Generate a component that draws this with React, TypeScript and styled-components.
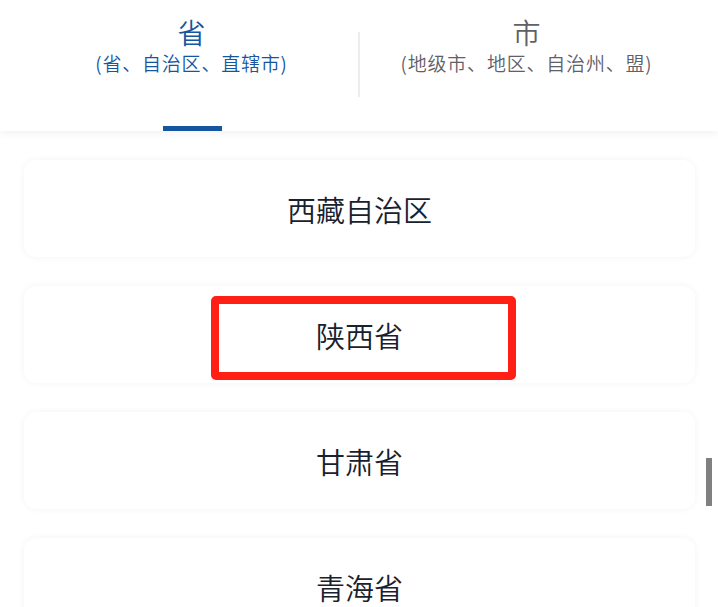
import styled, { createGlobalStyle } from 'styled-components';

const GLOBAL = createGlobalStyle`
  html, body {
    margin: 0;
    padding: 0;
    background: #ffffff;
    overflow: hidden;
    font-family: "Noto Sans CJK SC", "Noto Sans", sans-serif;
  }
`;

const PAGE = styled.div`
  position: relative;
  width: 718px;
  height: 607px;
  overflow: hidden;
  background: #ffffff;
`;

const HEADER = styled.div`
  position: relative;
  z-index: 2;
  height: 131px;
  padding: 0 24px;
  display: flex;
  background: #ffffff;
  box-shadow: 0 2px 8px rgba(0, 0, 0, 0.06);
`;

const TAB = styled.div<{ $active?: boolean; $divider?: boolean }>`
  position: relative;
  flex: 1;
  display: flex;
  flex-direction: column;
  align-items: center;
  padding-top: 13px;
  font-weight: 350;
  color: ${(p) => (p.$active ? '#15569f' : '#5f6068')};

  &::after {
    content: '';
    display: ${(p) => (p.$divider ? 'block' : 'none')};
    position: absolute;
    right: -1px;
    top: 32px;
    width: 2px;
    height: 65px;
    background: #ececec;
  }
`;

const TAB_TITLE = styled.span`
  font-size: 28px;
  line-height: 38px;
`;

const TAB_SUB = styled.span`
  font-size: 19px;
  line-height: 24px;
  letter-spacing: 0.8px;
`;

const INDICATOR = styled.div`
  position: absolute;
  bottom: 0;
  left: 50%;
  width: 59px;
  height: 5px;
  margin-left: -29px;
  background: #15569f;
`;

const LIST = styled.div`
  display: flex;
  flex-direction: column;
  gap: 29px;
  padding: 29px 23px 0 24px;
`;

const CARD = styled.div`
  position: relative;
  height: 97px;
  flex-shrink: 0;
  display: flex;
  align-items: center;
  justify-content: center;
  background: #ffffff;
  border-radius: 12px;
  box-shadow: 0 0 7px rgba(0, 0, 0, 0.05);
  font-size: 29px;
  font-weight: 350;
  color: #18212e;
`;

const HIGHLIGHT = styled.div`
  position: absolute;
  left: 187px;
  top: 10px;
  width: 305px;
  height: 84px;
  box-sizing: border-box;
  border: 8px solid #ff1f14;
  border-radius: 5px;
`;

const SCROLL_THUMB = styled.div`
  position: absolute;
  left: 706px;
  top: 458px;
  width: 6px;
  height: 48px;
  background: #808080;
`;

const provinces = ['西藏自治区', '陕西省', '甘肃省', '青海省'];

export default function App(): JSX.Element {
  return (
    <PAGE>
      <GLOBAL />
      <HEADER>
        <TAB $active $divider>
          <TAB_TITLE>省</TAB_TITLE>
          <TAB_SUB>(省、自治区、直辖市)</TAB_SUB>
          <INDICATOR />
        </TAB>
        <TAB>
          <TAB_TITLE>市</TAB_TITLE>
          <TAB_SUB>(地级市、地区、自治州、盟)</TAB_SUB>
        </TAB>
      </HEADER>
      <LIST>
        {provinces.map((name) => (
          <CARD key={name}>
            {name}
            {name === '陕西省' && <HIGHLIGHT />}
          </CARD>
        ))}
      </LIST>
      <SCROLL_THUMB />
    </PAGE>
  );
}
